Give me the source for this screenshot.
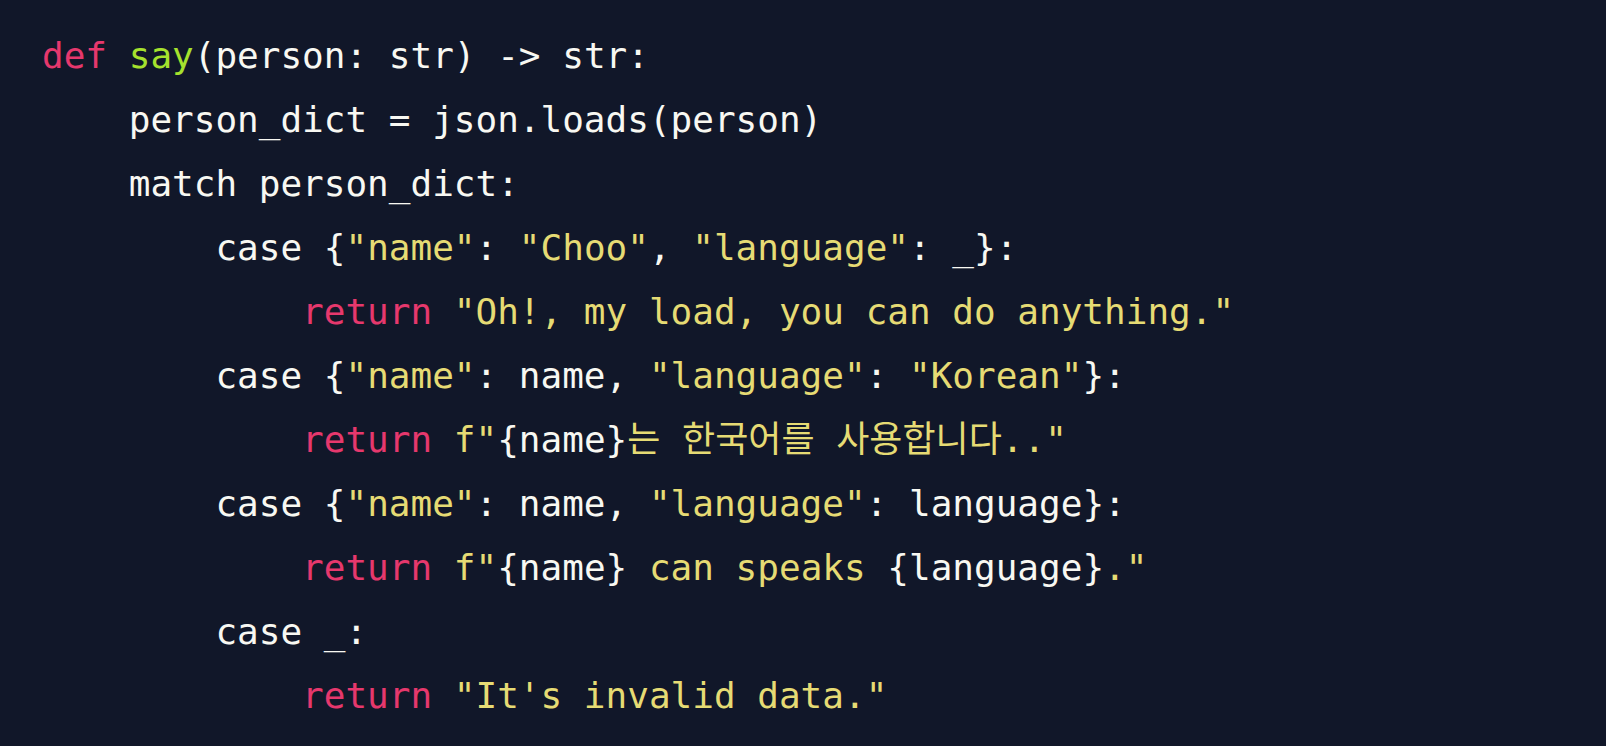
const K = ({ children }: { children: React.ReactNode }) => <span className="text-[#e6386d]">{children}</span>;
const S = ({ children }: { children: React.ReactNode }) => <span className="text-[#e6db74]">{children}</span>;
const F = ({ children }: { children: React.ReactNode }) => <span className="text-[#a6e22e]">{children}</span>;

const Line = ({ indent = 0, children }: { indent?: number; children: React.ReactNode }) => (
  <div className="whitespace-pre">
    {" ".repeat(indent)}
    {children}
  </div>
);

export default function App() {
  return (
    <div className="w-[1606px] h-[746px] bg-[#111729] text-[#f8f8f2] overflow-hidden">
      <pre
        className="px-[42px] pt-[24px] text-[36px] leading-[64px]"
        style={{ fontFamily: '"DejaVu Sans Mono", "Noto Sans CJK KR", monospace' }}
      >
        <Line>
          <K>def</K> <F>say</F>(person: str) -&gt; str:
        </Line>
        <Line indent={4}>person_dict = json.loads(person)</Line>
        <Line indent={4}>match person_dict:</Line>
        <Line indent={8}>
          case {"{"}<S>"name"</S>: <S>"Choo"</S>, <S>"language"</S>: _{"}"}:
        </Line>
        <Line indent={12}>
          <K>return</K> <S>"Oh!, my load, you can do anything."</S>
        </Line>
        <Line indent={8}>
          case {"{"}<S>"name"</S>: name, <S>"language"</S>: <S>"Korean"</S>{"}"}:
        </Line>
        <Line indent={12}>
          <K>return</K> <S>f"</S>{"{name}"}<S>는 한국어를 사용합니다.."</S>
        </Line>
        <Line indent={8}>
          case {"{"}<S>"name"</S>: name, <S>"language"</S>: language{"}"}:
        </Line>
        <Line indent={12}>
          <K>return</K> <S>f"</S>{"{name}"}<S> can speaks </S>{"{language}"}<S>."</S>
        </Line>
        <Line indent={8}>case _:</Line>
        <Line indent={12}>
          <K>return</K> <S>"It's invalid data."</S>
        </Line>
      </pre>
    </div>
  );
}
